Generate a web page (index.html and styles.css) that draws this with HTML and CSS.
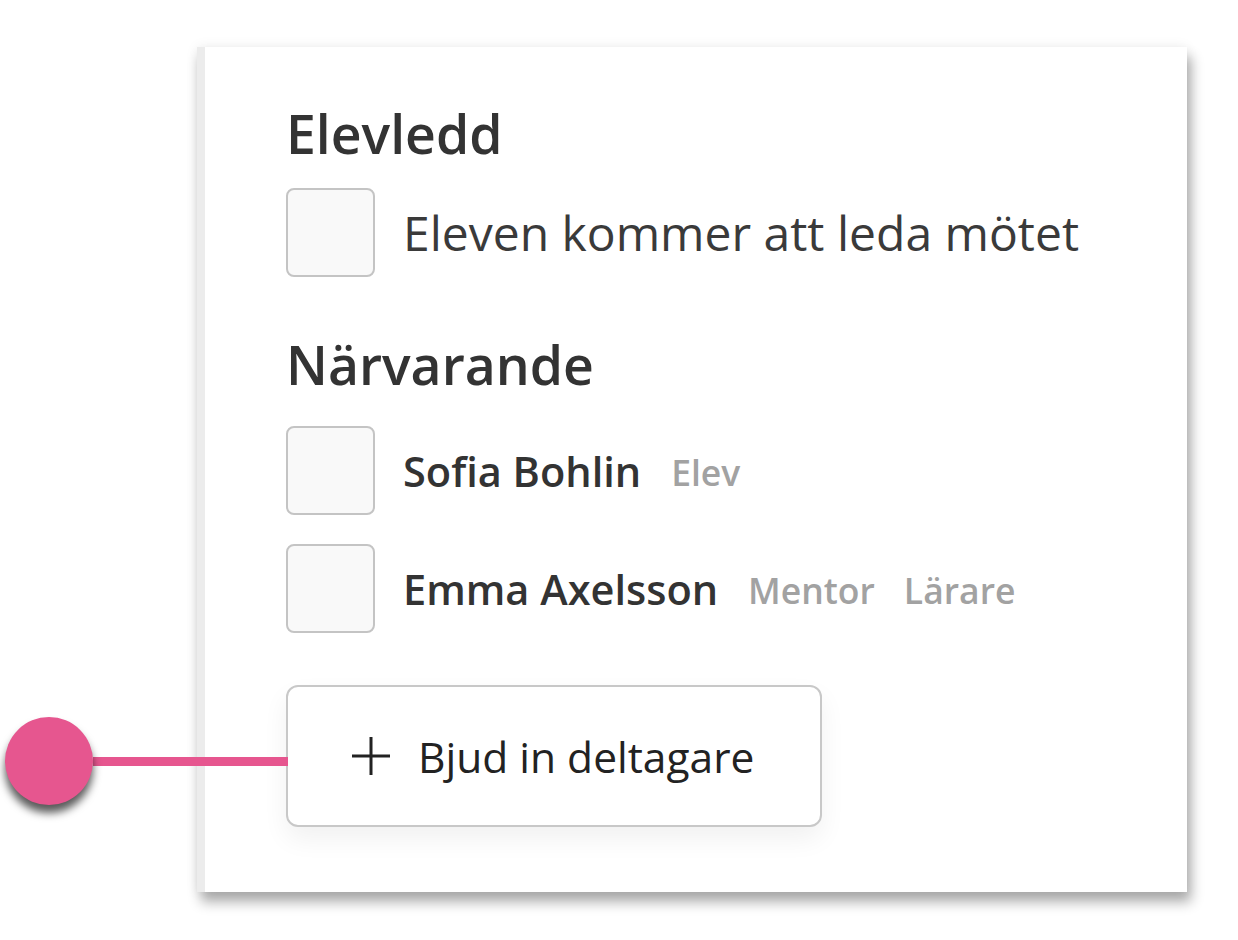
FILE: index.html
```html
<!DOCTYPE html>
<html lang="sv">
  <head>
    <meta charset="UTF-8" />
    <meta name="viewport" content="width=device-width, initial-scale=1.0" />
    <title>Deltagare</title>
    <link rel="stylesheet" href="styles.css">
  </head>
  <body>
    <div class="page">
      <div class="card">
        <!-- Elevledd -->
        <h2 class="section-title">Elevledd</h2>
        <label class="check-row">
          <span class="checkbox"></span>
          <span class="check-text">Eleven kommer att leda mötet</span>
        </label>

        <!-- Närvarande -->
        <h2 class="section-title section-title-spaced">Närvarande</h2>
        <div class="attendee-list">
          <label class="check-row">
            <span class="checkbox"></span>
            <span class="person-name">Sofia Bohlin</span>
            <span class="person-role">Elev</span>
          </label>
          <label class="check-row">
            <span class="checkbox"></span>
            <span class="person-name">Emma Axelsson</span>
            <span class="person-role">Mentor</span>
            <span class="person-role">Lärare</span>
          </label>
        </div>

        <button type="button" class="invite-button">
          <span class="callout-pin">
            <span class="pin-dot"></span>
            <span class="pin-line"></span>
          </span>
          <svg class="plus-icon" viewBox="0 0 38 38" width="38" height="38">
            <path d="M19 0 V38 M0 19 H38" stroke="#222" stroke-width="3" fill="none" />
          </svg>
          <span>Bjud in deltagare</span>
        </button>
      </div>
    </div>
  </body>
</html>
```

FILE: styles.css
```css
body {
  margin: 0;
  background-color: #fff;
  font-family: "Open Sans", "Noto Sans", sans-serif;
  color: #333;
}
.page {
  padding: 47px 0 48px 197px;
}
.card {
  width: 901px;
  border-left: 8px solid #ececec;
  background-color: #fff;
  box-shadow: 0 0 12px rgba(0, 0, 0, 0.07), 4px 10px 12px rgba(0, 0, 0, 0.32);
  padding: 55px 0 65px 81px;
}
.section-title {
  margin: 0 0 22px;
  font-size: 53.5px;
  line-height: 64px;
  font-weight: 600;
  color: #333;
}
.section-title-spaced {
  margin-top: 56px;
  margin-bottom: 29px;
}
.check-row {
  display: flex;
  align-items: center;
}
.checkbox {
  width: 85px;
  height: 85px;
  border: 2px solid #c4c4c4;
  border-radius: 8px;
  background-color: #f9f9f9;
  flex-shrink: 0;
  margin-right: 28px;
}
.check-text {
  font-size: 48px;
  line-height: 60px;
  color: #3a3a3a;
}
.attendee-list {
  display: flex;
  flex-direction: column;
  gap: 29px;
}
.person-name {
  font-size: 41.5px;
  font-weight: 600;
  color: #333;
  margin-right: 30px;
}
.person-role {
  font-size: 35.5px;
  font-weight: 600;
  color: #a2a2a2;
  margin-right: 29px;
  position: relative;
  top: 1px;
}
.invite-button {
  position: relative;
  margin-top: 52px;
  width: 536px;
  height: 142px;
  display: flex;
  align-items: center;
  gap: 28px;
  padding: 0 0 0 64px;
  border: 2px solid #c8c8c8;
  border-radius: 12px;
  background-color: #fff;
  box-shadow: 0 12px 26px rgba(0, 0, 0, 0.06);
  font-family: "Open Sans", "Noto Sans", sans-serif;
  font-size: 42.5px;
  color: #222;
  cursor: pointer;
}
.plus-icon {
  flex-shrink: 0;
}
.callout-pin {
  position: absolute;
  right: 100%;
  top: 30px;
  width: 283px;
  height: 88px;
  display: flex;
  align-items: center;
}
.pin-dot {
  width: 88px;
  height: 88px;
  border-radius: 50%;
  background-color: #e6568f;
  box-shadow: 0 8px 8px rgba(0, 0, 0, 0.65);
  flex-shrink: 0;
  position: relative;
  z-index: 1;
}
.pin-line {
  flex: 1;
  height: 9px;
  background-color: #e6568f;
}
```
